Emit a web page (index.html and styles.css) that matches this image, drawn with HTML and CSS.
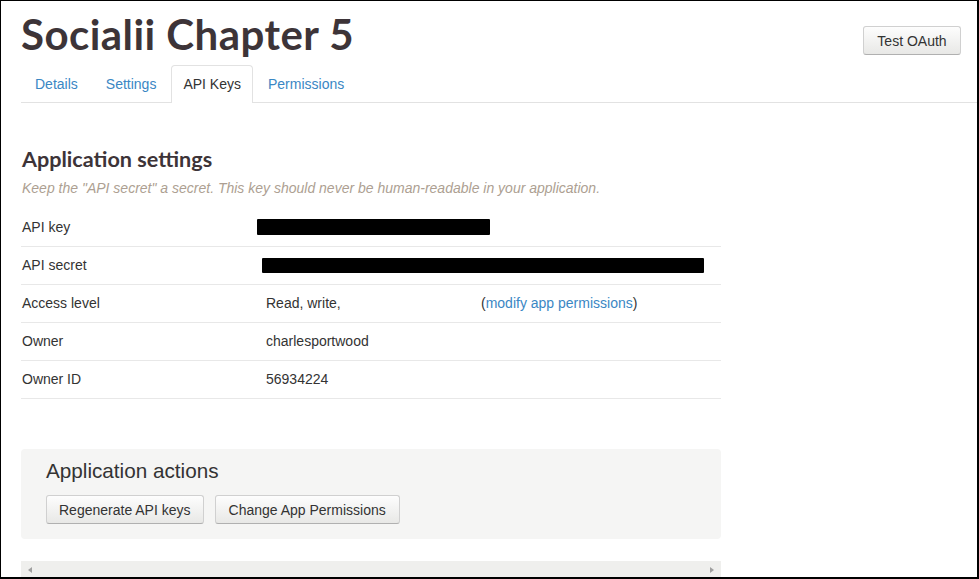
FILE: index.html
```html
<!DOCTYPE html>
<html>
<head>
<meta charset="utf-8">
<link rel="stylesheet" href="styles.css">
</head>
<body>
<div class="frame">
  <header class="page-head">
    <h1 class="title">Socialii Chapter 5</h1>
    <button class="btn btn-oauth">Test OAuth</button>
  </header>
  <ul class="tabs">
    <li><a href="#">Details</a></li>
    <li><a href="#">Settings</a></li>
    <li class="active"><a href="#">API Keys</a></li>
    <li><a href="#">Permissions</a></li>
  </ul>
  <section class="content">
    <h2 class="section-title">Application settings</h2>
    <p class="muted">Keep the "API secret" a secret. This key should never be human-readable in your application.</p>
    <div class="table">
      <div class="row">
        <div class="label">API key</div>
        <div class="value"><span class="redact redact-key"></span></div>
      </div>
      <div class="row">
        <div class="label">API secret</div>
        <div class="value"><span class="redact redact-secret"></span></div>
      </div>
      <div class="row">
        <div class="label">Access level</div>
        <div class="value pad">Read, write,</div>
        <div class="extra">(<a href="#">modify app permissions</a>)</div>
      </div>
      <div class="row">
        <div class="label">Owner</div>
        <div class="value pad">charlesportwood</div>
      </div>
      <div class="row">
        <div class="label">Owner ID</div>
        <div class="value pad">56934224</div>
      </div>
    </div>
    <div class="actions">
      <h3 class="actions-title">Application actions</h3>
      <div class="btn-row">
        <button class="btn">Regenerate API keys</button>
        <button class="btn btn-wide">Change App Permissions</button>
      </div>
    </div>
    <div class="hscroll">
      <span class="arrow arrow-left"></span>
      <span class="arrow arrow-right"></span>
    </div>
  </section>
</div>
</body>
</html>
```
FILE: styles.css
```css
html, body {
  margin: 0;
  padding: 0;
  background: #fff;
}
.frame {
  box-sizing: border-box;
  width: 979px;
  height: 579px;
  border-top: 1px solid #000;
  border-left: 1px solid #000;
  border-right: 2px solid #000;
  border-bottom: 2px solid #000;
  overflow: hidden;
  font-family: "Liberation Sans", Arial, sans-serif;
  font-size: 14px;
  color: #333;
}
.page-head {
  display: flex;
  justify-content: space-between;
  align-items: flex-start;
  padding: 0 16px 0 20px;
  height: 64px;
}
.title {
  margin: 8px 0 0 0;
  font-family: Lato, "Open Sans", sans-serif;
  font-weight: 700;
  font-size: 42px;
  line-height: 50px;
  color: #3d3438;
  letter-spacing: 0.45px;
}
.btn {
  font-family: "Liberation Sans", Arial, sans-serif;
  font-size: 14px;
  color: #333;
  height: 29px;
  padding: 0 13px;
  border: 1px solid #d0d0d0;
  border-bottom-color: #b0b0b0;
  border-radius: 3px;
  background: linear-gradient(#fdfdfd, #e8e8e6);
  box-shadow: inset 0 1px 0 rgba(255,255,255,0.3);
  cursor: pointer;
}
.btn-oauth {
  margin-top: 25px;
  width: 98px;
  padding: 0;
}
.tabs {
  list-style: none;
  margin: 0 0 0 20px;
  padding: 0;
  display: flex;
  border-bottom: 1px solid #e2e2e2;
  height: 37px;
}
.tabs li {
  margin-right: 2px;
  margin-bottom: -1px;
}
.tabs a {
  display: block;
  padding: 8px 12px 9px;
  line-height: 20px;
  border: 1px solid transparent;
  border-bottom: none;
  border-radius: 4px 4px 0 0;
  color: #3a87c4;
  text-decoration: none;
}
.tabs li:first-child a {
  padding-left: 13px;
}
.tabs .active a {
  color: #333;
  background: #fff;
  border-color: #e2e2e2;
  padding-right: 11px;
  padding-left: 11px;
}
.content {
  padding-left: 20px;
  width: 700px;
}
.section-title {
  margin: 42px 0 0 1px;
  font-family: Lato, "Open Sans", sans-serif;
  font-weight: 700;
  font-size: 21.6px;
  line-height: 28px;
  color: #3d3438;
}
.muted {
  margin: 5px 0 0 1px;
  font-style: italic;
  font-size: 14px;
  line-height: 20px;
  color: #ad9f92;
}
.table {
  margin-top: 11px;
}
.row {
  display: flex;
  height: 37px;
  align-items: center;
  border-bottom: 1px solid #e8e8e8;
}
.label, .value, .extra {
  margin-top: -2px;
}
.label {
  width: 235px;
  padding-left: 1px;
}
.value {
  width: 215px;
}
.value.pad {
  padding-left: 9px;
  width: 206px;
}
.extra {
  padding-left: 9px;
}
.extra a {
  color: #3a87c4;
  text-decoration: none;
}
.redact {
  display: block;
  background: #000;
  height: 16px;
  border-radius: 1px;
}
.redact-key {
  width: 233px;
  margin-top: 1px;
}
.redact-secret {
  width: 442px;
  margin-left: 5px;
  margin-top: 1px;
  height: 15px;
}
.actions {
  margin-top: 50px;
  background: #f5f5f4;
  border-radius: 4px;
  height: 90px;
  padding: 0 25px;
  box-sizing: border-box;
}
.actions-title {
  margin: 0;
  padding-top: 9px;
  font-weight: normal;
  font-size: 20.7px;
  line-height: 26px;
  color: #333;
}
.btn-row {
  display: flex;
  gap: 11px;
  margin-top: 11px;
}
.btn-row .btn {
  padding: 0 12px;
}
.btn-row .btn-wide {
  padding: 0 13px;
}
.hscroll {
  margin-top: 22px;
  height: 17px;
  background: #efefed;
  display: flex;
  justify-content: space-between;
  align-items: center;
  padding: 0 7px;
}
.arrow {
  width: 0;
  height: 0;
  border-top: 3px solid transparent;
  border-bottom: 3px solid transparent;
}
.arrow-left {
  border-right: 4px solid #a0a0a0;
}
.arrow-right {
  border-left: 4px solid #a0a0a0;
}
```
